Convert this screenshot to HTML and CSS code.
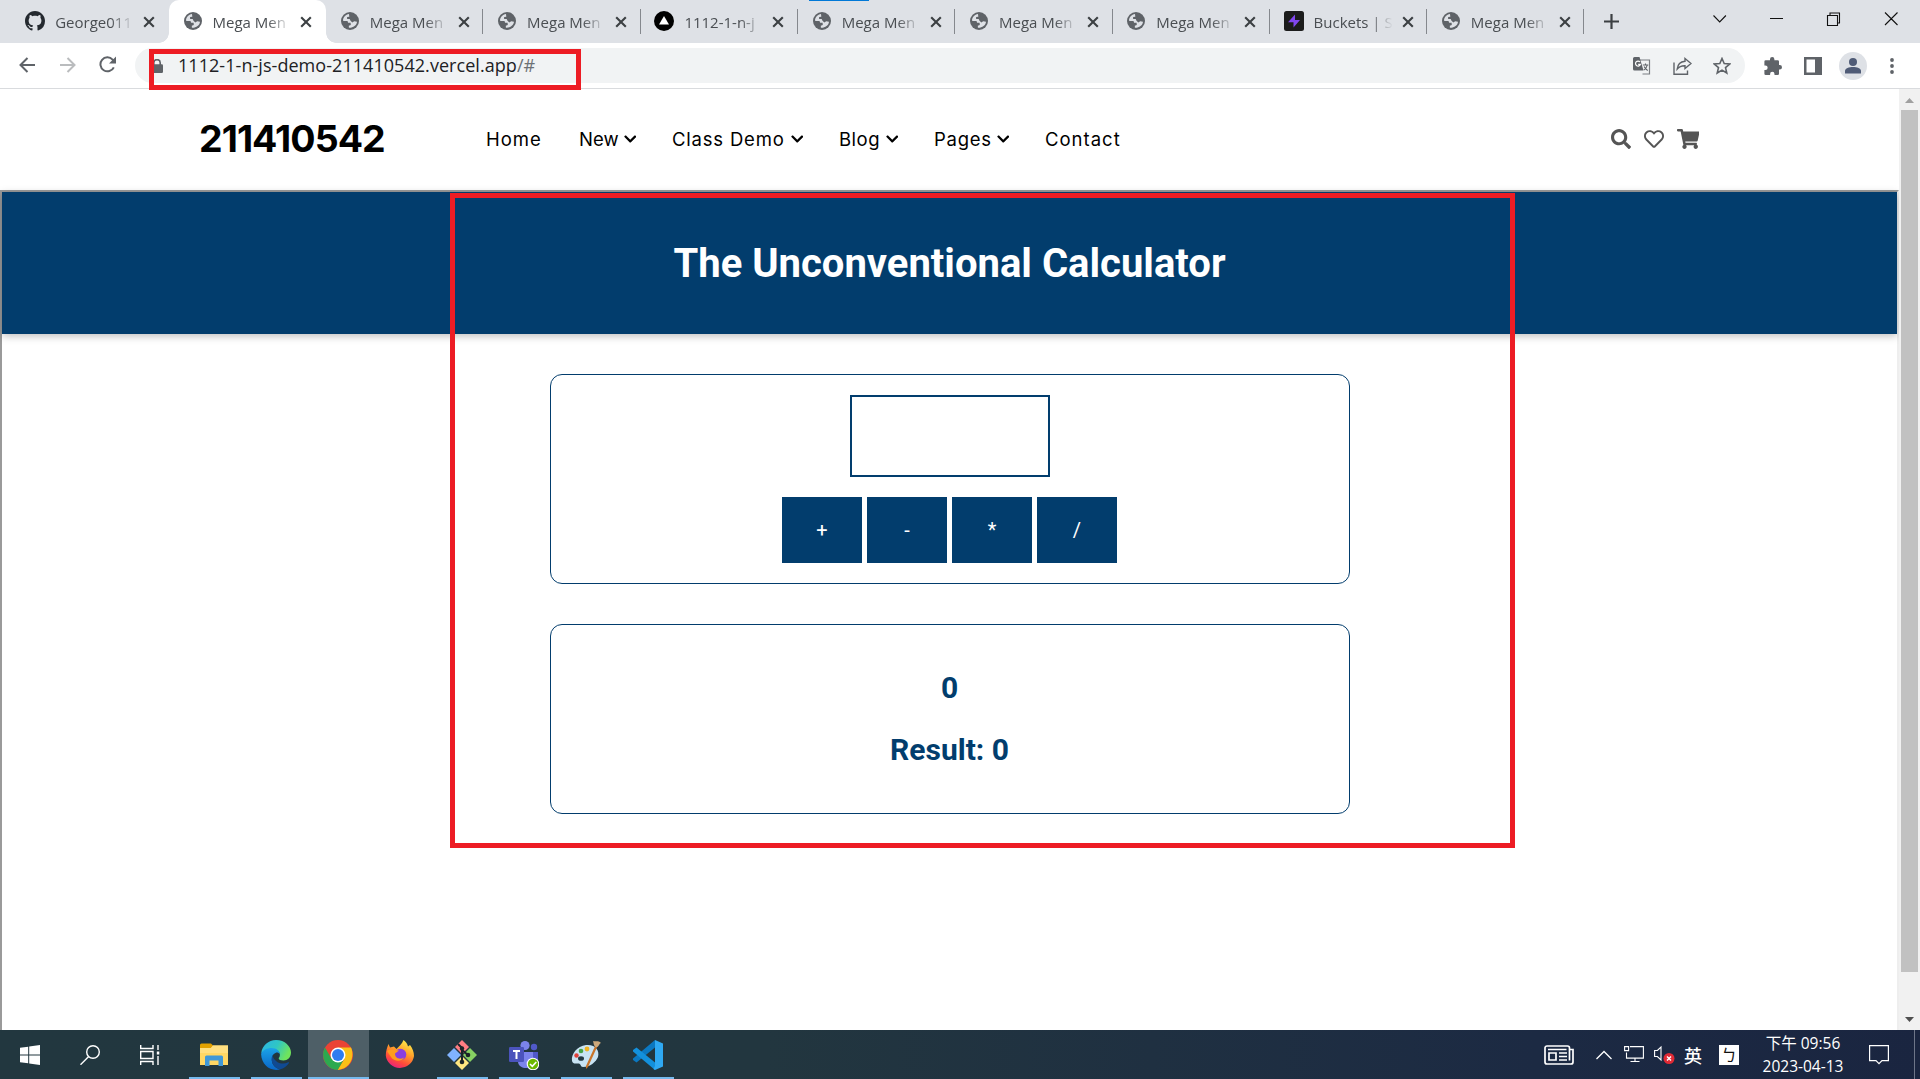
FILE: index.html
```html
<!DOCTYPE html>
<html lang="en">
<head>
<meta charset="utf-8">
<title>Mega Menu</title>
<link rel="stylesheet" href="styles.css">
</head>
<body>
<svg class="defs" width="0" height="0">
  <symbol id="x" viewBox="0 0 12 12"><path d="M1.2 1.2l9.6 9.6M10.8 1.2l-9.6 9.6" stroke="#3c4043" stroke-width="2.1"/></symbol>
  <symbol id="globe" viewBox="0 0 18 18"><circle cx="9" cy="9" r="9" fill="#5f6368"/><path d="M8 2.1C4.6 2.5 2 5.400 2 8.800l1.200.3h3.300l.6 1.600H9.600l.2 2.400-2 .700.1 2C11.500 16.200 15.800 13.500 16 9.800L13.200 9.300 11.300 10.400 9.500 8.800 8.700 6.900H6.100V5L8.300 4.700z" fill="#dee1e6"/><path d="M10.300 2.300L10.200 5.200 12.400 7.400 15.500 7C14.700 4.600 12.800 2.800 10.300 2.300z" fill="#5f6368"/></symbol>
  <symbol id="chev" viewBox="0 0 448 512"><path fill="currentColor" d="M207.029 381.476L12.686 187.132c-9.373-9.373-9.373-24.569 0-33.941l22.667-22.667c9.357-9.357 24.522-9.375 33.901-.04L224 284.505l154.745-154.021c9.379-9.335 24.544-9.317 33.901.04l22.667 22.667c9.373 9.373 9.373 24.569 0 33.941L240.971 381.476c-9.373 9.372-24.569 9.372-33.942 0z"/></symbol>
</svg>

<div class="tabstrip">
  <div class="tab"><svg class="fav" viewBox="0 0 16 16"><path fill="#24292f" d="M8 0C3.580 0 0 3.580 0 8c0 3.540 2.290 6.530 5.470 7.590.4.070.55-.170.55-.380 0-.190-.010-.820-.010-1.490-2.010.370-2.530-.490-2.690-.940-.090-.230-.480-.940-.820-1.130-.280-.150-.680-.520-.010-.530.630-.010 1.080.580 1.230.820.720 1.210 1.870.870 2.330.660.070-.520.280-.870.510-1.070-1.780-.2-3.640-.890-3.640-3.950 0-.870.310-1.590.820-2.150-.080-.2-.360-1.020.080-2.120 0 0 .670-.210 2.200.820.640-.180 1.320-.270 2-.270s1.360.090 2 .270c1.530-1.040 2.200-.820 2.200-.820.440 1.100.160 1.920.080 2.120.510.560.820 1.270.820 2.150 0 3.070-1.870 3.750-3.650 3.950.290.250.540.730.540 1.480 0 1.070-.010 1.930-.010 2.200 0 .210.150.460.550.380A8.010 8.010 0 0 0 16 8c0-4.420-3.580-8-8-8z"/></svg><span class="ttl">George011</span><svg class="cls"><use href="#x"/></svg></div>
  <div class="tab active"><svg class="fav g"><use href="#globe"/></svg><span class="ttl">Mega Men</span><svg class="cls"><use href="#x"/></svg></div>
  <div class="tab sep"><svg class="fav g"><use href="#globe"/></svg><span class="ttl">Mega Men</span><svg class="cls"><use href="#x"/></svg></div>
  <div class="tab sep"><svg class="fav g"><use href="#globe"/></svg><span class="ttl">Mega Men</span><svg class="cls"><use href="#x"/></svg></div>
  <div class="tab sep"><svg class="fav" viewBox="0 0 20 20"><circle cx="10" cy="10" r="10"/><path d="M10 5l5 8.500H5z" fill="#fff"/></svg><span class="ttl">1112-1-n-j</span><svg class="cls"><use href="#x"/></svg></div>
  <div class="tab sep"><svg class="fav g"><use href="#globe"/></svg><span class="ttl">Mega Men</span><svg class="cls"><use href="#x"/></svg></div>
  <div class="tab sep"><svg class="fav g"><use href="#globe"/></svg><span class="ttl">Mega Men</span><svg class="cls"><use href="#x"/></svg></div>
  <div class="tab sep"><svg class="fav g"><use href="#globe"/></svg><span class="ttl">Mega Men</span><svg class="cls"><use href="#x"/></svg></div>
  <div class="tab sep"><svg class="fav" viewBox="0 0 20 20"><rect width="20" height="20" rx="2.500" fill="#1c1c1c"/><path d="M11 3.500L4 11.200h5.500V16.500L16 9h-5z" fill="#8247f0"/></svg><span class="ttl">Buckets | S</span><svg class="cls"><use href="#x"/></svg></div>
  <div class="tab sep"><svg class="fav g"><use href="#globe"/></svg><span class="ttl">Mega Men</span><svg class="cls"><use href="#x"/></svg></div>
  <svg class="plus" viewBox="0 0 15 15"><path d="M7.500 0v15M0 7.500h15" stroke="#3c4043" stroke-width="2.200"/></svg>
  <svg class="winbtns" viewBox="0 0 186 14" fill="none" stroke="#111" stroke-width="1.100"><path d="M.5 3.500l6.200 6.500 6.200-6.500M57 6.500h13M114.500 3.500h10v10h-10zM117 3.500v-2.500h9.500v10h-2M172 .5l12.500 12.500M184.500.5L172 13"/></svg>
  <i class="loading"></i>
</div>

<div class="toolbar">
  <svg class="nav-ic back" viewBox="0 0 16 16" fill="none" stroke="#5f6368" stroke-width="2"><path d="M16 8H1.500M8.500 1L1.500 8l7 7"/></svg>
  <svg class="nav-ic fwd" viewBox="0 0 16 16" fill="none" stroke="#babcbe" stroke-width="2"><path d="M0 8h14.500M7.500 1l7 7-7 7"/></svg>
  <svg class="nav-ic rel" viewBox="0 0 17 17"><path d="M14.800 11.300A7 7 0 1 1 13.600 3.600L15 5" fill="none" stroke="#5f6368" stroke-width="2"/><path d="M17 .5v7h-7z" fill="#5f6368"/></svg>
  <div class="omni">
    <svg class="lock" viewBox="0 0 14 14"><path d="M3.800 6V3.800a3.200 3.200 0 0 1 6.400 0V6" fill="none" stroke="#5f6368" stroke-width="1.600"/><rect x="1" y="5.300" width="12" height="8.700" rx="1.200" fill="#5f6368"/></svg>
    <span class="url">1112-1-n-js-demo-211410542.vercel.app<b>/#</b></span>
    <svg class="om tr" viewBox="0 0 18 18"><path d="M7 3h9.500v14H9.500" fill="none" stroke="#7a7e82" stroke-width="1.200"/><path d="M1.500 0H6.500L10.500 13.500H1.500A1.500 1.500 0 0 1 0 12V1.500A1.500 1.500 0 0 1 1.500 0z" fill="#5f6368"/><path d="M7 5A2.500 2.500 0 1 0 7.400 7.300H5.200" fill="none" stroke="#fff" stroke-width="1.200"/><path d="M9.800 8h5.500M12.500 6.500V8M14.300 8c-.5 2.500-2 4-3.500 5M11.200 9.500c.5 1.500 2 3 3.500 4" fill="none" stroke="#5f6368" stroke-width="1.100"/></svg>
    <svg class="om sh" viewBox="0 0 19 18" fill="none" stroke="#5f6368" stroke-width="1.400"><path d="M1 5.500v11.700h13.500V13.500M12 1.500l6 5-6 5V8.700C8.500 8.600 6 9.700 4.200 12 4.600 8 7 4.800 12 4.300z"/></svg>
    <svg class="om st" viewBox="0 0 18 18"><path d="M9 1.500l2.200 5 5.500.5-4.200 3.600 1.300 5.400L9 13.100 4.200 16l1.300-5.400L1.300 7l5.500-.5z" fill="none" stroke="#5f6368" stroke-width="1.600"/></svg>
  </div>
  <svg class="pz" viewBox="0 0 18 18"><path d="M1.700 3.300H6V2.200a2.200 2.200 0 0 1 4.400 0V3.300H13.700A1.300 1.300 0 0 1 15 4.600V8h.8a2.200 2.200 0 0 1 0 4.400H15V16.700A1.300 1.300 0 0 1 13.700 18H10.500V17a2.200 2.200 0 0 0-4.400 0v1H1.700A1.300 1.300 0 0 1 .4 16.700V13h1a2.200 2.200 0 0 0 0-4.500H.4V4.600A1.300 1.300 0 0 1 1.700 3.300z" fill="#5f6368"/></svg>
  <svg class="sp" viewBox="0 0 18 18"><path fill-rule="evenodd" d="M0 0h18v18H0zM2.500 2.500v13H11v-13z" fill="#5f6368"/></svg>
  <svg class="av" viewBox="0 0 28 28"><circle cx="14" cy="14" r="14" fill="#dee1e6"/><circle cx="14" cy="10" r="4" fill="#4f5b76"/><path d="M6 21.500V19c0-2.600 4-4 8-4s8 1.400 8 4v2.500z" fill="#4f5b76"/></svg>
  <svg class="dots" viewBox="0 0 4 16"><circle cx="2" cy="2" r="1.900"/><circle cx="2" cy="8" r="1.900"/><circle cx="2" cy="14" r="1.900"/></svg>
</div>

<div class="viewport">
  <div class="page">
    <header class="site">
      <div class="logo">211410542</div>
      <nav>
        <a class="n1">Home</a>
        <a class="n2">New<svg><use href="#chev"/></svg></a>
        <a class="n3">Class Demo<svg><use href="#chev"/></svg></a>
        <a class="n4">Blog<svg><use href="#chev"/></svg></a>
        <a class="n5">Pages<svg><use href="#chev"/></svg></a>
        <a class="n6">Contact</a>
      </nav>
      <div class="icons">
        <svg width="20" height="20" viewBox="0 0 512 512"><path fill="#555" d="M505 442.700L405.300 343c-4.500-4.500-10.600-7-17-7H372c27.600-35.300 44-79.700 44-128C416 93.100 322.900 0 208 0S0 93.100 0 208s93.100 208 208 208c48.300 0 92.700-16.400 128-44v16.300c0 6.400 2.500 12.500 7 17l99.700 99.700c9.400 9.400 24.600 9.400 33.900 0l28.300-28.300c9.400-9.400 9.400-24.600.1-34zM208 336c-70.700 0-128-57.200-128-128 0-70.700 57.200-128 128-128 70.700 0 128 57.200 128 128 0 70.700-57.200 128-128 128z"/></svg>
        <svg width="20" height="20" viewBox="0 0 512 512"><path fill="#555" d="M458.400 64.300C400.600 15.700 311.300 23 256 79.300 200.700 23 111.400 15.600 53.600 64.300-21.600 127.600-10.600 230.800 43 285.500l175.400 178.700c10 10.200 23.400 15.900 37.600 15.900 14.300 0 27.600-5.600 37.600-15.800L469 285.600c53.500-54.700 64.700-157.900-10.600-221.300zm-23.600 187.500L259.400 430.500c-2.400 2.400-4.400 2.400-6.800 0L77.200 251.800c-36.500-37.200-43.900-107.600 7.300-150.700 38.900-32.700 98.900-27.800 136.500 10.500l35 35.700 35-35.700c37.800-38.500 97.800-43.200 136.500-10.600 51.100 43.100 43.500 113.900 7.300 150.800z"/></svg>
        <svg width="22.500" height="20" viewBox="0 0 576 512"><path fill="#555" d="M528.120 301.319l47.273-208C578.806 78.301 567.391 64 551.990 64H159.208l-9.166-44.810C147.758 8.021 137.930 0 126.529 0H24C10.745 0 0 10.745 0 24v16c0 13.255 10.745 24 24 24h69.883l70.248 343.435C147.325 417.100 136 435.222 136 456c0 30.928 25.072 56 56 56s56-25.072 56-56c0-15.674-6.447-29.835-16.824-40h209.647C430.447 426.165 424 440.326 424 456c0 30.928 25.072 56 56 56s56-25.072 56-56c0-22.172-12.888-41.332-31.579-50.405l5.517-24.276c3.413-15.018-8.002-29.319-23.403-29.319H218.117l-6.545-32h293.145c11.206 0 20.920-7.754 23.403-18.681z"/></svg>
      </div>
    </header>
    <main class="frame">
      <div class="banner"><h1>The Unconventional Calculator</h1></div>
      <section class="card calc">
        <input class="num" type="text">
        <div class="ops"><button>+</button><button>-</button><button>*</button><button>/</button></div>
      </section>
      <section class="card results"><h2>0</h2><h2>Result: 0</h2></section>
    </main>
  </div>
  <div class="scroll">
    <svg viewBox="0 0 9 5"><path d="M4.500 0L9 5H0z" fill="#a0a0a0"/></svg>
    <i></i>
    <svg viewBox="0 0 9 5"><path d="M4.500 5L9 0H0z" fill="#505050"/></svg>
  </div>
</div>

<div class="taskbar">
  <div class="sys"><svg width="20" height="20" viewBox="0 0 20 20" fill="#fff"><path d="M0 2.800L8.200 1.700V9.500H0zM9.200 1.500L20 0v9.500H9.200zM0 10.500h8.200v7.800L0 17.200zM9.200 10.500H20V20L9.200 18.500z"/></svg></div>
  <div class="sys"><svg width="20" height="20" viewBox="0 0 20 20" fill="none" stroke="#fff" stroke-width="1.400"><circle cx="13" cy="7" r="6.300"/><path d="M8.700 11.500L.5 19.700"/></svg></div>
  <div class="sys"><svg width="20" height="20" viewBox="0 0 20 20" fill="none" stroke="#fff" stroke-width="1.400"><path d="M.7 0v3.500H13V0M.7 20v-3.500H13V20M.7 6.500H13v7H.7zM18 0v5M18 11v9"/><path d="M16.800 6.500h2.500v3h-2.500z" fill="#fff" stroke="none"/></svg></div>
  <div class="app on"><svg width="28" height="24" viewBox="0 0 28 24"><path d="M0 2A1.500 1.500 0 0 1 1.500.5H11L13 2.500V6H0z" fill="#e2a100"/><path d="M0 5h11l2-2.500h15V22H0z" fill="#ffd764"/><path d="M0 5h11l2-2.500h15V10H0z" fill="#ffdf80"/><path d="M5 23V14a1.500 1.500 0 0 1 1.500-1.500h15A1.500 1.500 0 0 1 23 14v9h-4.500v-5.500h-9V23z" fill="#3f98d8"/></svg></div>
  <div class="app on"><svg width="30" height="30" viewBox="0 0 30 30"><defs><linearGradient id="e1" x1="0" y1="0" x2="1" y2=".4"><stop offset="0" stop-color="#2bb3e6"/><stop offset=".55" stop-color="#2fc6c4"/><stop offset="1" stop-color="#6fe35c"/></linearGradient><linearGradient id="e2" x1="0" y1="0" x2="0" y2="1"><stop offset="0" stop-color="#1ba3e8"/><stop offset="1" stop-color="#0a66c8"/></linearGradient></defs><path d="M.2 13.500C1 5.500 7.500 0 15 0c9 0 15 6.500 15 12.500 0 5-3.500 8-7.500 8-3 0-4.800-1-4.800-2 0-.8 1.200-1.300 1.200-3.700C18.900 11.500 15.500 9 11 9 6 9 1.500 11.500.2 13.500z" fill="url(#e1)"/><path d="M.1 14C1.500 10 6 8 10.500 8c5 0 8.300 3 8.400 6.300-1-1.500-2.500-2-4-1.500-3 1-4.500 4-4 8 .5 4.500 4 8 8.500 8.500C10 32 .5 25.500.1 14z" fill="url(#e2)"/><path d="M11.500 15c-3 7 2 13.500 8 14.300 4-1.300 6.500-3.500 8.500-6.300.4-.7-.2-1-.8-.7-7 3.500-14.700-.8-15.700-7.300z" fill="#104a92"/></svg></div>
  <div class="app on cur"><svg width="30" height="30" viewBox="0 0 30 30"><circle cx="15" cy="15" r="15" fill="#ea4335"/><path d="M15 7.500h13C32 16 28 29 14.500 30L21.500 18.800z" fill="#fbc117"/><path d="M2 7.500C-3 16 2 29 14.700 30l6.500-11.200H8.500z" fill="#2da94f"/><circle cx="15" cy="15" r="7.500" fill="#fff"/><circle cx="15" cy="15" r="6" fill="#2f7cf0"/></svg></div>
  <div class="app"><svg width="30" height="30" viewBox="0 0 30 30"><defs><linearGradient id="f1" x1=".8" y1="0" x2=".3" y2="1"><stop offset="0" stop-color="#fff44f"/><stop offset=".4" stop-color="#ffa42a"/><stop offset=".75" stop-color="#ff4a3a"/><stop offset="1" stop-color="#e82080"/></linearGradient></defs><path d="M3.500 4L5 7.500 9 6.500 11.500 9C14 6.500 17 4 18.500 0c2.500 2 4 4 4.500 6.500L25 5c2.500 3.500 4 6.500 4 11A14.200 13.800 0 0 1 .8 15.500C.8 11 2 8 3.500 4z" fill="url(#f1)"/><circle cx="15.500" cy="14.500" r="5.800" fill="#8a3fe0"/><path d="M2 11c4-3 8-1 12-.5l-4 3c0 5 5 6.500 9 4-2 4.500-10 4.500-13-.5z" fill="#ff9d1e"/></svg></div>
  <div class="app on"><svg width="30" height="30" viewBox="0 0 30 30"><path d="M15 0l7 7-7 7-7-7z" fill="#ff7d83"/><path d="M30 15l-7-7-7 7 7 7z" fill="#87d163"/><path d="M0 15l7-7 7 7-7 7z" fill="#80b3ff"/><path d="M15 30l7-7-7-7-7 7z" fill="#ffe680"/><path d="M11 4l4 4v15M15 10l6 5" fill="none" stroke="#1b2428" stroke-width="2"/><circle cx="15" cy="8.500" r="2.200" fill="#1b2428"/><circle cx="21" cy="15" r="2.300" fill="#1b2428"/><circle cx="15" cy="22" r="2.300" fill="#1b2428"/></svg></div>
  <div class="app on"><svg width="30" height="30" viewBox="0 0 30 30"><circle cx="25" cy="7" r="3.200" fill="#5059c9"/><circle cx="16" cy="5.500" r="4.600" fill="#7b83eb"/><path d="M21 12h8v9a5 5 0 0 1-8 3z" fill="#5059c9"/><path d="M9 12h15v10c0 8-14 8-15 0z" fill="#7b83eb"/><rect y="7" width="15" height="15" rx="1.200" fill="#4b53bc"/><path d="M4 11h7M7.500 11v8" stroke="#fff" stroke-width="2"/><circle cx="24" cy="24" r="6.300" fill="#fff"/><circle cx="24" cy="24" r="5.200" fill="#6bb700"/><path d="M21 24l2.300 2.300 4-4.300" fill="none" stroke="#fff" stroke-width="1.600"/></svg></div>
  <div class="app on"><svg width="30" height="30" viewBox="0 0 30 30"><path d="M15 5C6 6 0 14 1 21c1 4 5 2 7 2.500 2.500 1 1 3 4 3.500 7 0 13-5 15-10C29 10 24 4 15 5z" fill="#c8e3f3"/><ellipse cx="10" cy="18.500" rx="3" ry="2.300" fill="#22373f"/><circle cx="5.500" cy="15.500" r="2.200" fill="#e0413a"/><circle cx="10" cy="11" r="2.300" fill="#47a447"/><circle cx="16" cy="9" r="2.400" fill="#f0b323"/><path d="M25 4l2 1-10 22-2 2 0-3z" fill="#c8742a"/><path d="M22 1c2.500 1 5-1 8 2-2 .5-2.500 5-5 4-2-.8-2-2-3-6z" fill="#cda87b"/></svg></div>
  <div class="app on"><svg width="30" height="30" viewBox="0 0 30 30"><path d="M22 0v7.500L3.500 22.500 0 20v-1.500z" fill="#0b78c1"/><path d="M22 30v-7.500L3.500 7.500 0 10v1.500z" fill="#1390dc"/><path d="M22 0l8 3.500v23L22 30l-1.500-1 1.500-3z" fill="#2fa9f3"/></svg></div>
  <div class="tray">
    <svg class="t1" width="30" height="20" viewBox="0 0 30 20" fill="none" stroke="#fff" stroke-width="1.700"><path d="M3 1h20.500a2 2 0 0 1 2 2v1.500H29V17a2 2 0 0 1-2 2H3a2 2 0 0 1-2-2V3a2 2 0 0 1 2-2zM25.500 4.500V15.500M4 4.500h18.500M5 8h7v7H5zM15 8h8M15 11.500h8M15 15h8"/></svg>
    <svg class="t2" width="16" height="10" viewBox="0 0 16 10" fill="none" stroke="#fff" stroke-width="1.300"><path d="M.5 9L8 1.500 15.500 9"/></svg>
    <svg class="t3" width="20" height="17" viewBox="0 0 20 17" fill="none" stroke="#fff" stroke-width="1.100"><path d="M6 .6h13.400v11.500H2.500V6.500M.6.600h4v4h-4zM11 12v3.500M6.500 15.500h9"/></svg>
    <svg class="t4" width="21" height="20" viewBox="0 0 21 20"><path d="M.6 5.500h2.800L7 2v13l-3.600-3.500H.6z" fill="none" stroke="#fff" stroke-width="1.100"/><circle cx="15" cy="13.500" r="5.500" fill="#e02a35"/><path d="M13 11.500l4 4M17 11.500l-4 4" stroke="#fff" stroke-width="1.400"/></svg>
    <span class="ime">英</span>
    <span class="bpmf">ㄅ</span>
    <div class="clock"><span class="tm">下午 09:56</span><span>2023-04-13</span></div>
    <svg class="t5" width="20" height="20" viewBox="0 0 20 20" fill="none" stroke="#fff" stroke-width="1.200"><path d="M.6.600h18.800v15h-6.400l-3 3-3-3H.6z"/></svg>
    <i class="peek"></i>
  </div>
</div>

<div class="mark m1"></div>
<div class="mark m2"></div>
</body>
</html>
```
FILE: styles.css
```css
* { box-sizing: border-box; }
body { margin: 0; width: 1920px; height: 1079px; overflow: hidden; background: #fff; display: flex; flex-direction: column; position: relative; font-family: "Open Sans", "Noto Sans CJK TC", sans-serif; }
svg { display: block; flex: none; }
.defs { position: absolute; }

/* tab strip */
.tabstrip { height: 43px; flex: none; background: #dee1e6; display: flex; align-items: center; padding-left: 11.500px; position: relative; }
.tab { width: 157.300px; height: 43px; flex: none; display: flex; align-items: center; padding-left: 13.800px; position: relative; }
.tab.active { background: #fff; border-radius: 10px 10px 0 0; }
.tab.active::before, .tab.active::after { content: ""; position: absolute; bottom: 0; width: 10px; height: 10px; }
.tab.active::before { left: -10px; background: radial-gradient(circle at 0 0, transparent 9.500px, #fff 10px); }
.tab.active::after { right: -10px; background: radial-gradient(circle at 100% 0, transparent 9.500px, #fff 10px); }
.tab.sep { border-right: 1px solid #85888d; height: 25px; }
.fav { width: 20px; height: 20px; margin-bottom: 1px; }
.fav.g { width: 18px; height: 18px; margin: 0 1px 1px; }
.ttl { width: 79px; margin-left: 9.900px; font-size: 15px; line-height: 25px; font-weight: 400; color: #4a4e52; white-space: nowrap; padding-top: 1px; -webkit-mask-image: linear-gradient(90deg, #000 70%, transparent 100%); mask-image: linear-gradient(90deg, #000 70%, transparent 100%); }
.cls { width: 12px; height: 12px; margin-left: 9px; }
.plus { width: 15px; height: 15px; margin-left: 19.500px; }
.winbtns { width: 186px; height: 14px; margin: -6px 0 0 94px; }
.loading { position: absolute; left: 809px; top: 0; width: 60px; height: 1px; background: #0078d7; }

/* toolbar */
.toolbar { height: 46px; flex: none; border-bottom: 1px solid #d9dbde; display: flex; align-items: center; padding-left: 19px; }
.nav-ic { width: 16px; height: 16px; margin-top: -2px; }
.fwd { margin-left: 25px; }
.rel { width: 17px; height: 17px; margin-left: 23px; }
.omni { width: 1610px; height: 35px; margin-left: 19px; border-radius: 18px; background: #f1f3f4; display: flex; align-items: center; padding-left: 15px; }
.lock { width: 14px; height: 14px; }
.url { width: 1455px; margin-left: 14px; font-size: 18px; letter-spacing: .05px; line-height: 30px; color: #202124; white-space: nowrap; padding-bottom: 2px; }
.url b { font-weight: 400; color: #6d7175; }
.om { width: 18px; height: 18px; }
.sh { width: 19px; margin-left: 22px; }
.st { margin-left: 21px; }
.pz, .sp { width: 18px; height: 18px; margin-left: 19px; }
.sp { margin-left: 21.500px; }
.av { width: 28px; height: 28px; margin-left: 17.500px; }
.dots { width: 4px; height: 16px; margin-left: 23px; fill: #5f6368; }

/* page */
.viewport { height: 941px; flex: none; display: flex; }
.page { width: 1899px; display: flex; flex-direction: column; }
.site { height: 101px; flex: none; padding: 0 200px 0 199px; display: flex; align-items: center; font-family: Inter, sans-serif; color: #000; }
.logo { width: 287px; font-size: 37.500px; font-weight: 700; letter-spacing: -.950px; line-height: 50px; padding-bottom: 2px; }
nav { display: flex; flex: 1; padding-bottom: 1px; }
nav a { font-size: 18.500px; letter-spacing: 1px; line-height: 26px; display: flex; align-items: center; white-space: nowrap; }
nav a svg { width: 12.500px; height: 14px; margin: 0 0 0 auto; }
.n1 { width: 93px; }
.n2 { width: 57px; letter-spacing: .1px; }
.n3 { width: 131px; margin-left: 36px; letter-spacing: .8px; }
.n4 { width: 59px; margin-left: 36px; letter-spacing: .5px; }
.n5 { width: 75px; margin-left: 36px; letter-spacing: .75px; }
.n6 { margin-left: 36px; }
.icons { display: flex; gap: 13px; align-items: center; padding-bottom: 1px; }
.frame { flex: 1; border: 2px solid #9a9a9a; border-right-color: #eee; border-bottom: 0; font-family: Roboto, sans-serif; }
.banner { height: 142px; background: #023d6d; box-shadow: 0 2px 8px rgba(0, 0, 0, .26); }
h1, h2 { margin: 0; text-align: center; font-weight: 700; }
h1 { padding-top: 48px; font-size: 40px; line-height: 47px; color: #fff; }
.card { width: 800px; margin: 40px 0 0 548px; border: 1px solid #023d6d; border-radius: 12px; display: flex; flex-direction: column; align-items: center; }
.calc { height: 210px; padding-top: 20px; gap: 20px; }
.num { width: 200px; height: 82px; border: 2px solid #023d6d; background: #fff; font-size: 30px; padding: 0; }
.ops { display: flex; gap: 5px; padding-right: 1px; }
.ops button { width: 80px; height: 66px; border: 0; padding: 0; background: #023d6d; color: #fff; font: 20px/66px Roboto, sans-serif; }
.results { height: 190px; padding: 45px 1px 0 0; gap: 27px; color: #023d6d; }
.results h2 { font-size: 30px; line-height: 35px; }
.scroll { width: 21px; background: #f1f1f1; padding: 9px 2px 8px; display: flex; flex-direction: column; align-items: center; }
.scroll svg { width: 9px; height: 5px; }
.scroll i { width: 17px; height: 862px; margin: 7px 0 auto; background: #c1c1c1; }

/* taskbar */
.taskbar { height: 49px; flex: none; background: linear-gradient(90deg, #22373f 0, #22363f 40%, #1c2a43 80%, #1a2540 100%); display: flex; }
.sys { width: 60px; display: flex; align-items: center; justify-content: center; }
.app { width: 51px; margin-left: 11px; padding-right: 2px; display: flex; align-items: center; justify-content: center; }
.sys + .app { margin-left: 9px; }
.on { border-bottom: 2px solid #76b9ed; padding-top: 2px; }
.cur { width: 61px; margin: 0 -5px 0 6px; background: #4e5f67; }
.tray { margin-left: auto; width: 376px; display: flex; align-items: center; color: #fff; }
.t2 { margin-left: 22px; }
.t3 { margin-left: 12px; }
.t4 { margin-left: 10px; }
.ime { width: 19px; margin-left: 9px; font: 500 18px/24px "Noto Sans CJK TC", sans-serif; }
.bpmf { width: 20px; height: 20px; margin-left: 16px; background: #fff; color: #111; font: 16px/19px "Noto Sans CJK TC", sans-serif; text-align: center; }
.clock { width: 86px; margin-left: 21px; display: flex; flex-direction: column; align-items: center; font: 15.500px/23px "Open Sans", "Noto Sans CJK TC", sans-serif; white-space: nowrap; }
.t5 { margin-left: 23px; }
.peek { width: 1px; height: 49px; margin-left: 25px; background: #6d7588; }

/* annotation frames */
.mark { position: absolute; border: 5px solid #ed1c24; }
.m1 { left: 149px; top: 49px; width: 432px; height: 41px; }
.m2 { left: 450px; top: 193px; width: 1065px; height: 655px; }
```
